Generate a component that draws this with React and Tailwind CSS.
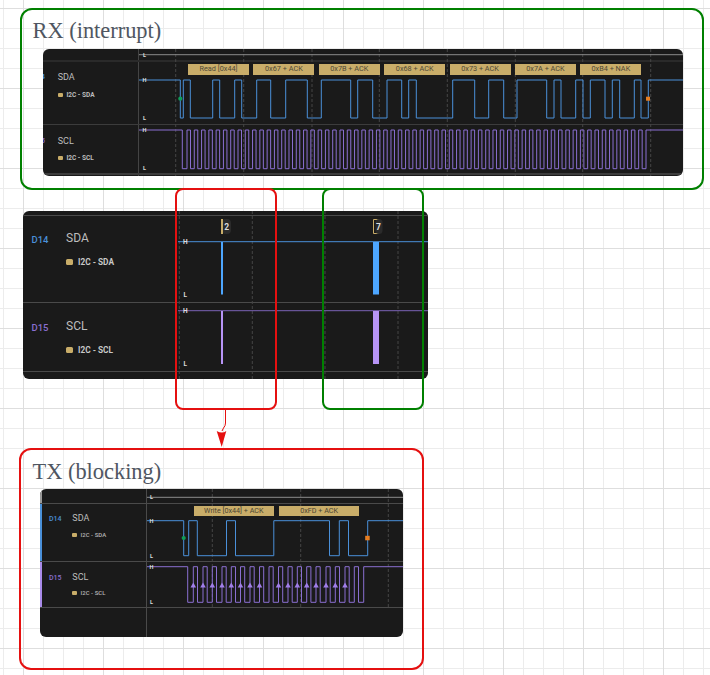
const BLUE = "#4a90d9";
const PURPLE = "#8a6fd1";
const DASH = "#454545";

// square wave path from toggle positions, page coordinates
function wave(edges, startHigh, hi, lo, x0, x1) {
  let high = startHigh;
  let d = `M${x0} ${high ? hi : lo}`;
  for (const x of edges) {
    d += `H${x}V${high ? lo : hi}`;
    high = !high;
  }
  return d + `H${x1}`;
}

function clockEdges(rises, width) {
  const out = [];
  for (const r of rises) out.push(r, +(r + width).toFixed(2));
  return out;
}

const rxSda = [180.3, 183.3, 190.3, 212.7, 219.7, 234.7, 241.7, 256.7, 270.7, 285.7, 307.3, 321.3, 350.7, 357.7, 372.7, 387, 401.7, 408.7, 416.3, 452.7, 474.7, 488.7, 503.7, 517, 546.7, 554, 561, 575.7, 583, 590.3, 605, 612.3, 619.7, 634.3, 641, 648.3];
const rxRises = Array.from({ length: 63 }, (_, i) => +(187 + i * 7.285).toFixed(2));
const rxScl = [182.3, ...clockEdges(rxRises, 3.5), 646];
const rxLabels = ["Read [0x44]", "0x67 + ACK", "0x7B + ACK", "0x68 + ACK", "0x73 + ACK", "0x7A + ACK", "0xB4 + NAK"];

const txSda = [183.7, 188.7, 197.3, 226.5, 235.5, 273.8, 329.5, 339.3, 348.5, 367.7];
const txTicks = [193.3, 203, 212.3, 222, 231.3, 240.5, 250, 259.5, 278.5, 288, 297.3, 306.7, 316, 326, 335.3, 345];
const txRises = [193.3, 203, 212.3, 222, 231.3, 240.5, 250, 259.5, 269, 278.5, 288, 297.3, 306.7, 316, 326, 335.3, 345, 354.3];
const txScl = [187.7, ...clockEdges(txRises, 4.2), 363.7];

function Level({ x, y, t, size = 5.5 }) {
  return (
    <text x={x} y={y} fontSize={size} fontWeight="700" fill="#dedede" textAnchor="middle" dominantBaseline="central">
      {t}
    </text>
  );
}

function Dashes({ xs, y0, y1 }) {
  return xs.map((x) => <line key={x} x1={x} x2={x} y1={y0} y2={y1} stroke={DASH} strokeDasharray="3 2" />);
}

function Track({ pin, pinClass, name, nameClass, subClass, squareClass, sub, gapClass }) {
  return (
    <>
      <span className={pinClass}>{pin}</span>
      <div className={`flex flex-col ${gapClass}`}>
        <span className={nameClass}>{name}</span>
        <div className="flex items-center">
          <span className={squareClass} />
          <span className={subClass}>{sub}</span>
        </div>
      </div>
    </>
  );
}

function RxPanel() {
  const pin = "-ml-[10.5px] mr-[13.2px] w-3 shrink-0 text-right text-[7px] leading-[11px] font-medium";
  const common = {
    nameClass: "text-[9px] leading-[11px] text-[#bdbdbd]",
    subClass: "text-[6.5px] leading-2 font-bold text-[#bdbdbd]",
    squareClass: "mr-[3.7px] h-1 w-[5px] rounded-[1px] bg-[#c9ad69]",
    gapClass: "gap-[7.5px]",
  };
  return (
    <div className="absolute top-[49px] left-[43px] flex h-[127px] w-[640px] flex-col overflow-hidden rounded-md bg-[#1a1a1a]">
      <div className="flex h-[12.5px] border-b-2 border-[#2a2a2a]">
        <div className="w-[96px] border-r border-[#444]" />
      </div>
      <div className="flex h-[63.5px] border-b border-[#3c3c3c]">
        <div className="flex w-[96px] border-r border-[#444] pt-[10.5px]">
          <Track pin="D14" pinClass={`${pin} text-[#4a90d9]`} name="SDA" sub="I2C - SDA" {...common} />
        </div>
        <div className="relative z-10 flex h-fit gap-[4.4px] pt-[2.5px] pl-[49px]">
          {rxLabels.map((l) => (
            <div key={l} className="flex h-[10.6px] w-[61px] items-center justify-center bg-[#c9ad69] text-[7.3px] text-[#4f4936]">
              {l}
            </div>
          ))}
        </div>
      </div>
      <div className="flex h-[50px] border-b-2 border-[#3c3c3c]">
        <div className="flex w-[96px] border-r border-[#444] pt-[10.5px]">
          <Track pin="D15" pinClass={`${pin} text-[#8a6fd1]`} name="SCL" sub="I2C - SCL" {...common} />
        </div>
      </div>
      <div className="flex-1">
        <div className="h-full w-[96px] border-r border-[#444]" />
      </div>
      <svg className="absolute inset-0" width="640" height="127" viewBox="43 49 640 127" fill="none">
        <Dashes xs={[175.7, 243.7, 312, 379.3, 447.3, 515.3, 582.7, 650.7]} y0={49} y1={176} />
        <path d="M139 54.7H683" stroke="#8c8c8c" />
        <path d={wave(rxSda, true, 80, 118, 139, 683)} stroke={BLUE} />
        <path d={wave(rxScl, true, 130, 168.7, 139, 683)} stroke={PURPLE} />
        <Level x={144.5} y={54.7} t="L" />
        <Level x={144.5} y={80} t="H" />
        <Level x={144.5} y={118} t="L" />
        <Level x={144.5} y={130} t="H" />
        <Level x={144.5} y={168} t="L" />
        <circle cx="180.3" cy="98.7" r="2.1" fill="#0f9d58" />
        <rect x="646" y="96.7" width="4" height="4" fill="#e67e22" />
      </svg>
    </div>
  );
}

function MidPanel() {
  const pin = "w-[35px] shrink-0 pt-[2px] text-[9.5px] leading-[14px] font-medium";
  const common = {
    nameClass: "text-[12px] leading-[14px] text-[#bdbdbd]",
    subClass: "text-[8.3px] leading-[10px] font-bold text-[#c8c8c8]",
    squareClass: "mr-[5px] h-[6px] w-[7px] rounded-[1.5px] bg-[#c9ad69]",
    gapClass: "-ml-[0.5px] gap-3",
  };
  return (
    <div className="absolute top-[211px] left-[23px] flex h-[168px] w-[405px] flex-col overflow-hidden rounded-md bg-[#1a1a1a]">
      <div className="h-[5px] border-b border-[#4a4a4a]" />
      <div className="flex h-[87px] border-b border-[#4a4a4a] pt-[15px] pl-[8.5px]">
        <Track pin="D14" pinClass={`${pin} text-[#4a90d9]`} name="SDA" sub="I2C - SDA" {...common} />
      </div>
      <div className="flex h-[69px] border-b border-[#4a4a4a] pt-4 pl-[8.5px]">
        <Track pin="D15" pinClass={`${pin} text-[#8a6fd1]`} name="SCL" sub="I2C - SCL" {...common} />
      </div>
      <svg className="absolute inset-0" width="405" height="168" viewBox="23 211 405 168" fill="none">
        <Dashes xs={[179.3, 252.3, 325, 398]} y0={211} y1={379} />
        <path d="M178 241.7H428" stroke={BLUE} />
        <path d="M178 310.7H428" stroke="#7a63b5" />
        <rect x="221" y="242" width="2" height="52.5" fill="#4da6ff" />
        <rect x="373" y="242" width="6" height="52.5" fill="#4da6ff" />
        <rect x="221" y="311" width="2" height="53" fill="#b794f6" />
        <rect x="373" y="311" width="6" height="53" fill="#b794f6" />
        <Level x={185.3} y={241.7} t="H" size={6.5} />
        <Level x={185.3} y={294.7} t="L" size={6.5} />
        <Level x={185.3} y={310.7} t="H" size={6.5} />
        <Level x={185.3} y={363.7} t="L" size={6.5} />
        <rect x="222" y="219" width="9" height="15" rx="4" fill="#2b2b2b" />
        <rect x="221" y="219" width="2" height="15" fill="#c9ad69" />
        <text x="226.6" y="226.8" fontSize="8.5" fontWeight="700" fill="#dcdcdc" textAnchor="middle" dominantBaseline="central">2</text>
        <path d="M379 219.5H373.5V233.5H379" stroke="#c9ad69" />
        <rect x="375.5" y="219" width="7" height="15" rx="3.5" fill="#2b2b2b" />
        <text x="378.5" y="226.8" fontSize="8.5" fontWeight="700" fill="#dcdcdc" textAnchor="middle" dominantBaseline="central">7</text>
      </svg>
    </div>
  );
}

function TxPanel() {
  const pin = "w-[23.3px] shrink-0 pt-[1px] text-[7px] leading-[11px] font-medium";
  const common = {
    nameClass: "text-[9px] leading-[11px] text-[#bdbdbd]",
    subClass: "text-[6px] leading-2 font-medium text-[#b5b5b5]",
    squareClass: "mr-[3.3px] h-1 w-[5px] rounded-[1px] bg-[#c9ad69]",
  };
  return (
    <div className="absolute top-[489px] left-[40px] flex h-[148px] w-[363px] flex-col overflow-hidden rounded-md bg-[#1a1a1a]">
      <div className="flex h-[15px] border-b border-[#4a4a4a]">
        <div className="w-[107px] border-r border-l-2 border-r-[#4a4a4a] border-l-[#9a9a9a]" />
      </div>
      <div className="flex h-[58px] border-b border-[#4a4a4a]">
        <div className="flex w-[107px] border-r border-l-2 border-r-[#4a4a4a] border-l-[#4a90d9] pt-[9px] pl-[7px]">
          <Track pin="D14" pinClass={`${pin} text-[#4a90d9]`} name="SDA" sub="I2C - SDA" gapClass="gap-[6.5px]" {...common} />
        </div>
        <div className="relative z-10 flex h-fit gap-[5.7px] pt-[2px] pl-[47px]">
          <div className="flex h-[10px] w-[79.6px] items-center justify-center bg-[#c9ad69] text-[7.2px] text-[#4a4432]">Write [0x44] + ACK</div>
          <div className="flex h-[10px] w-[79.6px] items-center justify-center bg-[#c9ad69] text-[7.2px] text-[#4a4432]">0xFD + ACK</div>
        </div>
      </div>
      <div className="flex h-[46px] border-b border-[#4a4a4a]">
        <div className="flex w-[107px] border-r border-l-2 border-r-[#4a4a4a] border-l-[#a98bea] pt-[10px] pl-[7px]">
          <Track pin="D15" pinClass={`${pin} text-[#8a6fd1]`} name="SCL" sub="I2C - SCL" gapClass="gap-[6px]" {...common} />
        </div>
      </div>
      <div className="flex-1">
        <div className="h-full w-[107px] border-r border-[#4a4a4a]" />
      </div>
      <svg className="absolute inset-0" width="363" height="148" viewBox="40 489 363 148" fill="none">
        <Dashes xs={[212.3, 300.7, 388.3]} y0={489} y1={607} />
        <path d="M147 497.3H403" stroke="#8c8c8c" />
        <path d={wave(txSda, true, 520.7, 555.7, 147, 403)} stroke={BLUE} />
        <path d={wave(txScl, true, 566.7, 602.3, 147, 403)} stroke={PURPLE} />
        {txTicks.map((x) => (
          <path key={x} d={`M${x - 2.8} 587.5H${x + 2.8}L${x} 582.5Z`} fill="#a07ee8" />
        ))}
        <Level x={151.5} y={497.3} t="L" />
        <Level x={151.5} y={520.7} t="H" />
        <Level x={151.5} y={555.7} t="L" />
        <Level x={151.5} y={566.7} t="H" />
        <Level x={151.5} y={602.3} t="L" />
        <circle cx="183.7" cy="538" r="2.1" fill="#0f9d58" />
        <rect x="365.2" y="535.8" width="4.5" height="4.5" fill="#e67e22" />
      </svg>
    </div>
  );
}

export default function App() {
  return (
    <div className="relative h-[675px] w-[710px] overflow-hidden bg-white bg-[image:linear-gradient(to_right,#dedede_1px,transparent_1px),linear-gradient(to_bottom,#dedede_1px,transparent_1px),linear-gradient(to_right,#ececec_1px,transparent_1px),linear-gradient(to_bottom,#ececec_1px,transparent_1px)] [background-position:23px_8px,23px_8px,3px_8px,3px_8px] [background-size:80px_80px,80px_80px,20px_20px,20px_20px] font-['Roboto',sans-serif]">
      <span className="absolute top-[17px] left-[32.5px] font-['Liberation_Serif',serif] text-[22.4px] leading-7 text-[#4f5661]">RX (interrupt)</span>
      <span className="absolute top-[458px] left-[32.5px] font-['Liberation_Serif',serif] text-[22.4px] leading-7 text-[#4f5661]">TX (blocking)</span>

      <RxPanel />
      <MidPanel />
      <TxPanel />

      <div className="absolute top-2 left-5 h-[182px] w-[684px] rounded-xl border-2 border-[#008000]" />
      <div className="absolute top-[188px] left-[322px] h-[222px] w-[102px] rounded-lg border-2 border-[#008000]" />
      <div className="absolute top-[188px] left-[175px] h-[222px] w-[102px] rounded-lg border-2 border-[#e51010]" />
      <div className="absolute top-[448px] left-[19px] h-[222px] w-[405px] rounded-xl border-2 border-[#e51010]" />

      <svg className="absolute top-[405px] left-[210px]" width="24" height="44" viewBox="210 405 24 44" fill="none">
        <path d="M225.5 410V423Q225.5 426 223.5 428L222 431" stroke="#e51010" />
        <path d="M216.7 431Q222 434 226.3 431L221.7 447Z" fill="#e51010" />
      </svg>
    </div>
  );
}
